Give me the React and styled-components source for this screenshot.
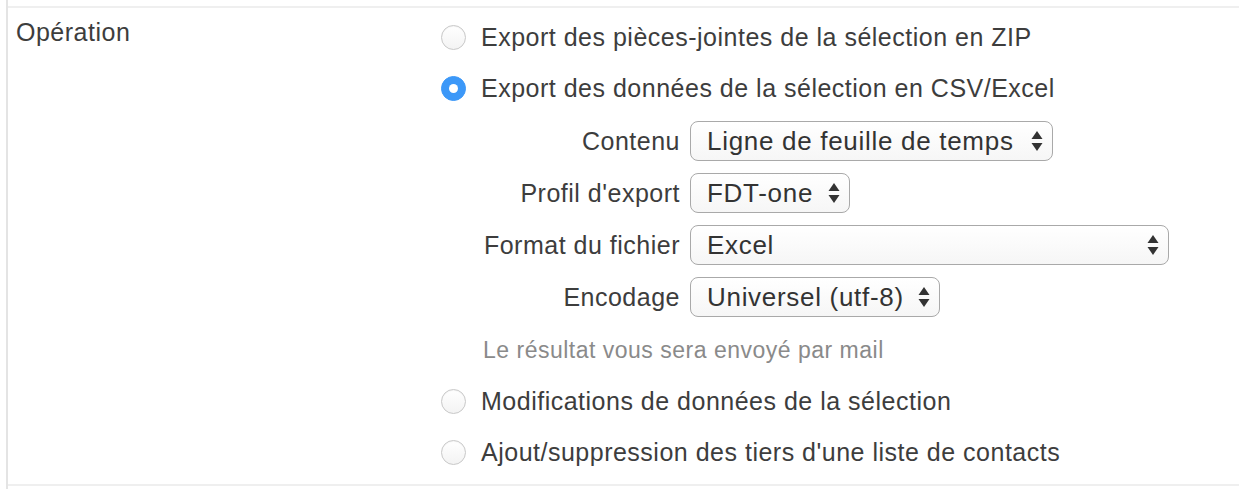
import React from 'react';
import styled, { createGlobalStyle } from 'styled-components';

const GlobalStyle = createGlobalStyle`
  body {
    margin: 0;
    background: #fff;
    font-family: "Liberation Sans", Arial, Helvetica, sans-serif;
    color: #333;
  }
`;

const Page = styled.div`
  margin-left: 6px;
  padding-top: 6px;
  border-left: 2px solid #e4e4e4;
  min-height: 489px;
  box-sizing: border-box;
`;

const Row = styled.div`
  display: flex;
  border-top: 2px solid #efefef;
  border-bottom: 2px solid #efefef;
  padding: 4px 0 6px;
`;

const RowLabel = styled.div`
  width: 425px;
  padding-left: 8px;
  font-size: 25px;
  letter-spacing: 0.5px;
  line-height: 40px;
  color: #3d3d3d;
  flex-shrink: 0;
`;

const Options = styled.div`
  display: flex;
  flex-direction: column;
`;

const Option = styled.label`
  display: flex;
  align-items: center;
  gap: 15px;
  height: 51px;
  font-size: 25px;
  letter-spacing: 0.5px;
  color: #3d3d3d;
  cursor: pointer;
`;

const Radio = styled.span`
  width: 25px;
  height: 25px;
  border-radius: 50%;
  box-sizing: border-box;
  display: flex;
  align-items: center;
  justify-content: center;
  background: ${p => (p.$checked ? '#3c98f8' : 'linear-gradient(#fff, #f3f3f3)')};
  border: 1px solid ${p => (p.$checked ? '#3c98f8' : '#c8c8c8')};
  box-shadow: ${p => (p.$checked ? 'none' : 'inset 0 1px 1px rgba(0,0,0,0.04)')};

  &::after {
    content: '';
    display: ${p => (p.$checked ? 'block' : 'none')};
    width: 9px;
    height: 9px;
    border-radius: 50%;
    background: #fff;
  }
`;

const SubForm = styled.div`
  display: flex;
  flex-direction: column;
  gap: 12px;
  margin-top: 7px;
`;

const Field = styled.div`
  display: flex;
  align-items: center;
  gap: 10px;
`;

const FieldLabel = styled.span`
  width: 239px;
  text-align: right;
  font-size: 25px;
  letter-spacing: 0.5px;
  color: #3d3d3d;
`;

const Select = styled.div`
  width: ${p => p.$width}px;
  height: 40px;
  box-sizing: border-box;
  border: 1px solid #a9a9a9;
  border-radius: 8px;
  background: linear-gradient(#ffffff, #f6f6f6);
  display: flex;
  align-items: center;
  justify-content: space-between;
  padding: 0 9px 0 16px;
  font-size: 26px;
  letter-spacing: 0.7px;
  color: #333;
  white-space: nowrap;
`;

const Help = styled.div`
  margin: 19px 0 12px 42px;
  font-size: 23px;
  letter-spacing: 0.5px;
  line-height: 28px;
  color: #8a8a8a;
`;

const Arrows = () => (
  <svg width="12" height="22" viewBox="0 0 12 22">
    <path d="M6 1 L11.5 9 L0.5 9 Z" fill="#333" />
    <path d="M6 21 L11.5 13 L0.5 13 Z" fill="#333" />
  </svg>
);

const fields = [
  { label: 'Contenu', value: 'Ligne de feuille de temps', width: 363 },
  { label: "Profil d'export", value: 'FDT-one', width: 160 },
  { label: 'Format du fichier', value: 'Excel', width: 479 },
  { label: 'Encodage', value: 'Universel (utf-8)', width: 250 },
];

const App = () => {
  return (
    <>
      <GlobalStyle />
      <Page>
        <Row>
          <RowLabel>Opération</RowLabel>
          <Options>
            <Option>
              <Radio />
              Export des pièces-jointes de la sélection en ZIP
            </Option>
            <Option>
              <Radio $checked />
              Export des données de la sélection en CSV/Excel
            </Option>
            <SubForm>
              {fields.map(f => (
                <Field key={f.label}>
                  <FieldLabel>{f.label}</FieldLabel>
                  <Select $width={f.width}>
                    <span>{f.value}</span>
                    <Arrows />
                  </Select>
                </Field>
              ))}
            </SubForm>
            <Help>Le résultat vous sera envoyé par mail</Help>
            <Option>
              <Radio />
              Modifications de données de la sélection
            </Option>
            <Option>
              <Radio />
              Ajout/suppression des tiers d'une liste de contacts
            </Option>
          </Options>
        </Row>
      </Page>
    </>
  );
};

export default App;
